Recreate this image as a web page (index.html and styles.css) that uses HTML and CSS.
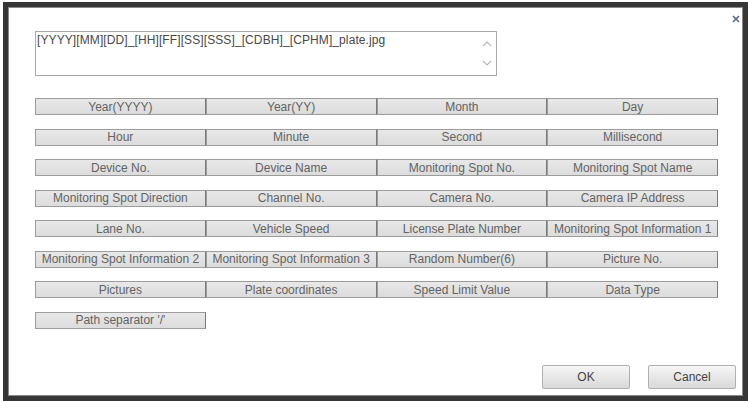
FILE: index.html
```html
<!DOCTYPE html>
<html lang="en">
<head>
  <meta charset="UTF-8" />
  <meta name="viewport" content="width=device-width, initial-scale=1.0" />
  <title>File Name Rule</title>
  <link rel="stylesheet" href="styles.css">
</head>
<body>
  <div class="dialog">
    <button class="close" type="button" title="Close">
      <svg width="8" height="8" viewBox="0 0 8 8"><path d="M1 1L7 7M7 1L1 7" stroke="#5b6b8c" stroke-width="1.7" fill="none"/></svg>
    </button>

    <div class="dialog-body">
      <div class="name-box">
        <div class="name-text" id="nameText">[YYYY][MM][DD]_[HH][FF][SS][SSS]_[CDBH]_[CPHM]_plate.jpg</div>
        <div class="name-scroll">
          <svg width="10" height="6" viewBox="0 0 10 6"><path d="M1 5L5 1L9 5" stroke="#b8b8b8" stroke-width="1.2" fill="none"/></svg>
          <svg width="10" height="6" viewBox="0 0 10 6"><path d="M1 1L5 5L9 1" stroke="#b8b8b8" stroke-width="1.2" fill="none"/></svg>
        </div>
      </div>

      <div class="tag-grid" id="tagGrid"></div>
    </div>

    <div class="dialog-footer">
      <button class="btn" type="button">OK</button>
      <button class="btn" type="button">Cancel</button>
    </div>
  </div>

  <script>
    const tags = [
      "Year(YYYY)", "Year(YY)", "Month", "Day",
      "Hour", "Minute", "Second", "Millisecond",
      "Device No.", "Device Name", "Monitoring Spot No.", "Monitoring Spot Name",
      "Monitoring Spot Direction", "Channel No.", "Camera No.", "Camera IP Address",
      "Lane No.", "Vehicle Speed", "License Plate Number", "Monitoring Spot Information 1",
      "Monitoring Spot Information 2", "Monitoring Spot Information 3", "Random Number(6)", "Picture No.",
      "Pictures", "Plate coordinates", "Speed Limit Value", "Data Type",
      "Path separator '/'"
    ];

    const grid = document.getElementById("tagGrid");
    tags.forEach(tag => {
      const btn = document.createElement("button");
      btn.type = "button";
      btn.className = "tag";
      btn.textContent = tag;
      grid.appendChild(btn);
    });
  </script>
</body>
</html>
```

FILE: styles.css
```css
body {
  margin: 0;
  background: #fff;
  font-family: "Liberation Sans", Arial, sans-serif;
}
.dialog {
  position: relative;
  box-sizing: border-box;
  margin: 2px 0 0 3px;
  width: 745px;
  height: 399px;
  border: 5px solid #363636;
  box-shadow: inset 0 0 0 1px #8a8a8a;
  background: #fff;
  display: flex;
  flex-direction: column;
}
.close {
  position: absolute;
  top: 6px;
  right: 1px;
  width: 12px;
  height: 12px;
  padding: 0;
  border: none;
  background: none;
  display: flex;
  align-items: center;
  justify-content: center;
  cursor: pointer;
}
.dialog-body {
  padding: 24px 25px 0 27px;
}
.name-box {
  box-sizing: border-box;
  width: 462px;
  height: 45px;
  border: 1px solid #a9a9a9;
  display: flex;
}
.name-text {
  flex: 1;
  padding: 1px 1px;
  font-size: 12px;
  line-height: 14px;
  color: #484848;
  letter-spacing: 0.1px;
}
.name-scroll {
  width: 18px;
  display: flex;
  flex-direction: column;
  align-items: center;
  gap: 13px;
  padding-top: 9px;
}
.tag-grid {
  margin-top: 22px;
  display: grid;
  grid-template-columns: repeat(4, 1fr);
  row-gap: 13.5px;
  width: 683px;
}
.tag {
  height: 17px;
  padding: 0;
  border: 1px solid #9c9c9c;
  border-right-color: #7a7a7a;
  background: linear-gradient(#e8e8e8, #dcdcdc);
  font-family: "Liberation Sans", Arial, sans-serif;
  font-size: 12px;
  color: #636363;
  white-space: nowrap;
  overflow: hidden;
  cursor: pointer;
}
.dialog-footer {
  margin-top: auto;
  display: flex;
  justify-content: flex-end;
  gap: 18px;
  padding: 0 7px 7px 0;
}
.btn {
  width: 88px;
  height: 24px;
  border: 1px solid #b0b0b0;
  border-radius: 2px;
  background: linear-gradient(#f6f6f6, #d9d9d9);
  font-family: "Liberation Sans", Arial, sans-serif;
  font-size: 12px;
  color: #444;
  cursor: pointer;
}
```
